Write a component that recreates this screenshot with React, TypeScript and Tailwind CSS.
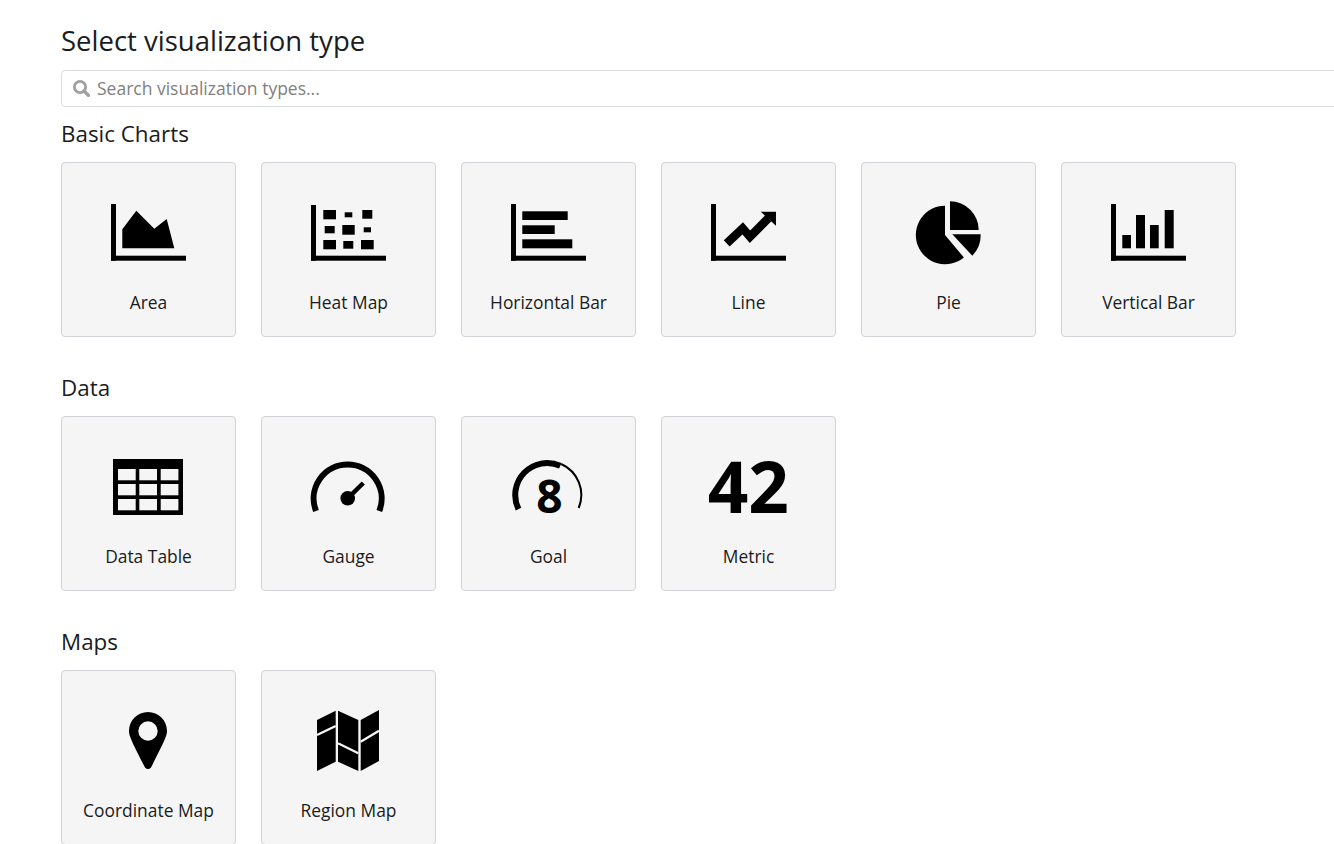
import { ReactNode } from 'react';

const CARD_BG = '#f5f5f5';

function Axis({ top = 14 }: { top?: number }) {
  return (
    <>
      <rect x="13" y={top} width="5" height={70.7 - top} />
      <rect x="13" y="65.7" width="75" height="5" />
    </>
  );
}

function Box({ x1, x2, y1, y2 }: { x1: number; x2: number; y1: number; y2: number }) {
  return <rect x={x1} y={y1} width={x2 - x1} height={y2 - y1} />;
}

const heatCells = [
  [25.3, 38, 20, 29.3],
  [46.7, 54.3, 22.3, 27.3],
  [64.3, 74.3, 20, 28.7],
  [26.7, 36.7, 36, 43.3],
  [44.3, 56.7, 35, 44.7],
  [65.7, 73, 37.3, 42.3],
  [25.3, 38, 50, 59.3],
  [45.3, 55.3, 51, 58.7],
  [63, 75.7, 50, 59.3],
];

const tableRows = [25, 40, 55];
const tableCols = [20, 41.3, 62.7];

const icons: Record<string, ReactNode> = {
  area: (
    <>
      <Axis />
      <polygon points="24.3,39.3 38.3,20.7 56.3,38.7 68.7,29 76.3,58.3 24.3,58.3" />
    </>
  ),
  heat: (
    <>
      <Axis top={15} />
      {heatCells.map(([x1, x2, y1, y2]) => (
        <Box key={`${x1}-${y1}`} x1={x1} x2={x2} y1={y1} y2={y2} />
      ))}
    </>
  ),
  hbar: (
    <>
      <Axis />
      <Box x1={24.3} x2={69.7} y1={21.3} y2={30} />
      <Box x1={24.3} x2={56.7} y1={35.3} y2={44} />
      <Box x1={24.3} x2={74.3} y1={49.3} y2={58.3} />
    </>
  ),
  line: (
    <>
      <Axis />
      <polyline
        points="28.7,53.3 44.7,38.3 52,46.7 70.3,28.3"
        fill="none"
        stroke="#000"
        strokeWidth="8.5"
      />
      <polygon points="62.7,21.7 78,21.7 78,35.7" />
    </>
  ),
  pie: (
    <>
      <path d="M47 45 L47 15.7 A29.3 29.3 0 1 0 65.9 67.5 Z" />
      <path d="M52 11.3 A28.7 28.7 0 0 1 80.7 40 L52 40 Z" />
      <path d="M54.3 44.3 L82.7 44.3 A29 29 0 0 1 74.3 65.7 Z" />
    </>
  ),
  vbar: (
    <>
      <Axis />
      <Box x1={24.3} x2={33} y1={45} y2={58.3} />
      <Box x1={38} x2={47} y1={25} y2={58.3} />
      <Box x1={52} x2={60.7} y1={35} y2={58.3} />
      <Box x1={66.7} x2={75.7} y1={20} y2={58.3} />
    </>
  ),
  table: (
    <>
      <Box x1={15} x2={85} y1={15} y2={71} />
      {tableRows.map((y) =>
        tableCols.map((x) => (
          <rect key={`${x}-${y}`} x={x} y={y} width="17.7" height="11.3" fill={CARD_BG} />
        )),
      )}
    </>
  ),
  gauge: (
    <>
      <path d="M18 67 A34 34 0 1 1 81.3 67" fill="none" stroke="#000" strokeWidth="6" />
      <circle cx="49.7" cy="54.3" r="7.3" />
      <line x1="49.7" y1="54.3" x2="65.3" y2="39" stroke="#000" strokeWidth="4.5" />
    </>
  ),
  goal: (
    <>
      <path d="M20.5 65.1 A32 32 0 0 1 62.3 21.8" fill="none" stroke="#000" strokeWidth="6" />
      <path d="M63.2 20 A34 34 0 0 1 80.7 64" fill="none" stroke="#000" strokeWidth="2" />
      <text x="51.5" y="69.3" textAnchor="middle" fontSize="46" fontWeight="700" fontFamily="'Open Sans', sans-serif">
        8
      </text>
    </>
  ),
  metric: (
    <text x="50.3" y="68.7" textAnchor="middle" fontSize="71" fontWeight="700" fontFamily="'Open Sans', sans-serif">
      42
    </text>
  ),
  pin: (
    <path
      fillRule="evenodd"
      d="M50 14 C60.5 14 69 22.5 69 33 C69 38 66 44 53 69.5 Q50 72.5 47 69.5 C34 44 31 38 31 33 C31 22.5 39.5 14 50 14 Z M50 23.3 A9.7 9.7 0 1 0 50 42.7 A9.7 9.7 0 1 0 50 23.3 Z"
    />
  ),
  map: (
    <>
      <polygon points="19,22 37.7,12.7 37.7,63.7 19,73" />
      <polygon points="40,12.7 60.3,22 60.3,73 40,63.7" />
      <polygon points="62.7,22 81,12 81,63 62.7,73" />
      <line x1="19" y1="37" x2="37.7" y2="28" stroke={CARD_BG} strokeWidth="2.3" />
      <line x1="40" y1="45.3" x2="60.3" y2="55.3" stroke={CARD_BG} strokeWidth="2.3" />
      <line x1="62.7" y1="43.7" x2="81" y2="32.7" stroke={CARD_BG} strokeWidth="2.3" />
    </>
  ),
};

const sections = [
  {
    title: 'Basic Charts',
    items: [
      { icon: 'area', label: 'Area' },
      { icon: 'heat', label: 'Heat Map' },
      { icon: 'hbar', label: 'Horizontal Bar' },
      { icon: 'line', label: 'Line' },
      { icon: 'pie', label: 'Pie' },
      { icon: 'vbar', label: 'Vertical Bar' },
    ],
  },
  {
    title: 'Data',
    items: [
      { icon: 'table', label: 'Data Table' },
      { icon: 'gauge', label: 'Gauge' },
      { icon: 'goal', label: 'Goal' },
      { icon: 'metric', label: 'Metric' },
    ],
  },
  {
    title: 'Maps',
    items: [
      { icon: 'pin', label: 'Coordinate Map' },
      { icon: 'map', label: 'Region Map' },
    ],
  },
];

function VisCard({ icon, label }: { icon: string; label: string }) {
  return (
    <button className="w-[175px] h-[175px] shrink-0 flex flex-col items-center bg-[#f5f5f5] border border-[#d0d3d8] rounded pt-[27px]">
      <svg width="101" height="80" viewBox="0 0 101 80" fill="#000" className="overflow-visible">
        {icons[icon]}
      </svg>
      <span className="mt-5 text-[17.4px] leading-6 text-[#1a1c21]">{label}</span>
    </button>
  );
}

export default function App() {
  return (
    <div className="h-[844px] overflow-hidden bg-white pl-[61px] font-['Open_Sans',sans-serif]">
      <h1 className="pt-[21px] text-[27.5px] leading-10 text-[#1a1c21]">Select visualization type</h1>
      <div className="mt-[9px] w-[1400px] h-[37px] flex items-center gap-[7px] pl-[11px] bg-white border border-[#d9dde2] rounded">
        <svg width="17" height="17" viewBox="0 0 17 17" fill="none" stroke="#a0a0a0" className="shrink-0 -mt-px">
          <circle cx="7" cy="7" r="5.6" strokeWidth="2.8" />
          <line x1="11" y1="11" x2="15.4" y2="15.4" strokeWidth="3.4" strokeLinecap="round" />
        </svg>
        <span className="text-[17.5px] leading-6 -mt-px text-[#808080]">Search visualization types...</span>
      </div>
      {sections.map((section) => (
        <section key={section.title} className="mb-[37px]">
          <h2 className="mt-[13px] mb-[14px] text-[22.4px] leading-7 text-[#1a1c21]">{section.title}</h2>
          <div className="flex gap-[25px]">
            {section.items.map((item) => (
              <VisCard key={item.label} icon={item.icon} label={item.label} />
            ))}
          </div>
        </section>
      ))}
    </div>
  );
}
